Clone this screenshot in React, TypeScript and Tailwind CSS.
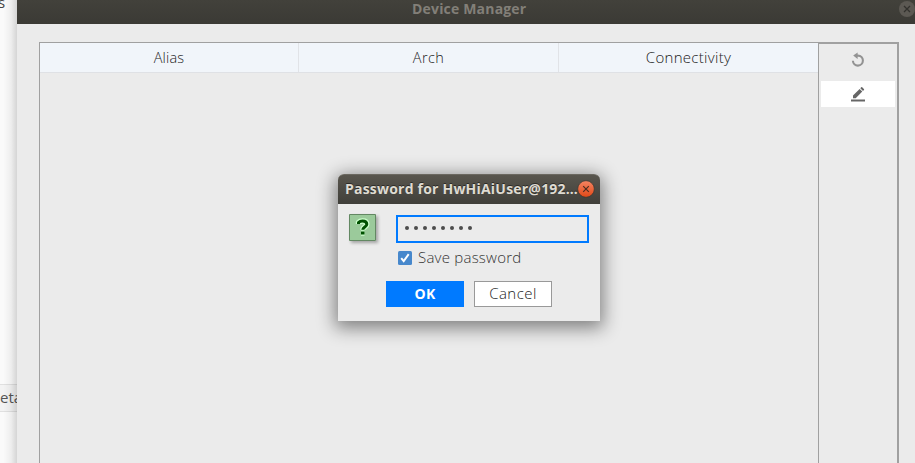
const columns = [
  { name: "Alias", spacing: "tracking-[0.15px]" },
  { name: "Arch", spacing: "tracking-[0.4px]" },
  { name: "Connectivity", spacing: "tracking-[0.3px] text-[15px]" },
];

function BackgroundWindow() {
  return (
    <div className="relative h-full w-[17px] shrink-0 overflow-hidden bg-[#fafafa] text-[15px] leading-5 text-[#555]">
      <div className="-mt-[8px] h-[392px] text-[#444]"><span className="-ml-[2px]">s</span></div>
      <div className="flex h-7 items-center border-y border-[#e0e0e0] bg-[#f3f3f3] pb-0.5">
        <span>eta</span>
      </div>
      <div className="absolute inset-0 bg-linear-to-r from-transparent from-20% via-black/5 via-65% to-black/15" />
    </div>
  );
}

function RefreshIcon() {
  return (
    <svg width="14" height="16" viewBox="0 0 14 16" fill="none">
      <path d="M5 3.6H7a5 5 0 1 1-5.1 5.2" stroke="#929292" strokeWidth="2.1" />
      <path d="M6.6 .4v6.5L2.2 3.6z" fill="#929292" />
    </svg>
  );
}

function EditIcon() {
  return (
    <svg width="14" height="15" viewBox="0 0 14 15" fill="#666">
      <path d="M2 8.5 8.6 1.9l2.7 2.7-6.6 6.6H2zM9.3 1.2l.9-.9q.5-.5 1 0l1.7 1.7q.5.5 0 1l-.9.9z" />
      <path d="M0 12.5h14v2H0z" />
    </svg>
  );
}

function PasswordDialog() {
  return (
    <div className="absolute left-[338px] top-[174px] h-[147px] w-[262px] rounded-t-[6px] bg-[#ebebeb] shadow-[0_4px_18px_3px_rgba(0,0,0,0.46)]">
      <div className="flex h-[30px] items-center rounded-t-[6px] border-t border-[#6b6860] bg-linear-to-b from-[#59564e] to-[#403f3a] pb-px pl-[7px]">
        <span className="w-[232px] shrink-0 whitespace-nowrap text-[14px] font-bold leading-7 tracking-[0.21px] text-[#dfdbd2] [text-shadow:0_-1px_0_#2c2b27]">
          Password for HwHiAiUser@192…
        </span>
        <svg className="shrink-0" width="18" height="18" viewBox="0 0 18 18">
          <defs>
            <linearGradient id="closeFill" x2="0" y2="1">
              <stop stopColor="#f58563" />
              <stop offset="1" stopColor="#df4817" />
            </linearGradient>
          </defs>
          <circle cx="9" cy="9" r="8.3" fill="url(#closeFill)" stroke="#383630" strokeWidth=".7" />
          <path d="m6.2 6.2 5.6 5.6m0-5.6-5.6 5.6" stroke="#4b2d20" strokeWidth="1.2" />
        </svg>
      </div>
      <div className="flex pl-[11px] pt-[10px]">
        <svg width="27" height="27" viewBox="0 0 27 27" className="shrink-0 shadow-[2px_2px_3px_rgba(0,0,0,0.3)]">
          <path d="M.5.5h26v26H.5z" fill="#9bca9b" stroke="#638863" />
          <g fill="none" strokeLinejoin="round">
            <path d="M9.5 10V8.5Q11 7 13.5 7c3 0 4.3 1.2 4.3 3.2 0 2.8-4 2.8-4 5.5M12 19h3.5" stroke="#cbffcb" strokeWidth="5.5" />
            <path d="M9.5 10V8.5Q11 7 13.5 7c3 0 4.3 1.2 4.3 3.2 0 2.8-4 2.8-4 5.5M12 19h3.5" stroke="#005000" strokeWidth="3" />
          </g>
        </svg>
        <div className="ml-5 mt-px flex flex-col">
          <div className="flex h-7 w-[193px] gap-[5px] border-2 border-[#007aff] pl-[7px] pt-[9px]">
            {Array.from({ length: 8 }, (_, i) => (
              <i key={i} className="size-1 rounded-full bg-[#4c4c4c]" />
            ))}
          </div>
          <label className="mt-[5px] flex h-5 items-center pl-0.5">
            <svg width="14" height="14" viewBox="0 0 14 14">
              <rect width="14" height="14" rx="1.5" fill="#4788cc" />
              <path d="m3.2 7.2 2.5 3 5-7" fill="none" stroke="white" strokeWidth="2" />
            </svg>
            <span className="mb-0.5 ml-1.5 text-[15px] font-light leading-5 tracking-[0.23px] text-[#333]">Save password</span>
          </label>
        </div>
      </div>
      <div className="mt-[13px] flex gap-2.5 pl-12 text-[15px]">
        <button className="h-[26px] w-[78px] bg-[#007aff] text-[14px] font-bold leading-6 tracking-[0.3px] text-white">OK</button>
        <button className="h-[26px] w-[78px] border border-[#999] bg-white pb-0.5 font-light leading-[22px] tracking-[0.45px] text-[#222]">Cancel</button>
      </div>
    </div>
  );
}

export default function App() {
  return (
    <div className="relative flex h-[463px] w-[915px] overflow-hidden bg-[#ebebeb] font-['Open_Sans','Noto_Sans',sans-serif]">
      <BackgroundWindow />
      <main className="flex h-full w-[898px] shrink-0 flex-col">
        <header className="relative flex h-6 items-start bg-linear-to-b from-[#42413b] to-[#3b3a35] pl-[395px]">
          <h1 className="-mt-px text-[14px] font-bold leading-[20px] tracking-[0.18px] text-[#827f78]">Device Manager</h1>
          <svg className="absolute right-0 top-px" width="16" height="16" viewBox="0 0 16 16">
            <circle cx="8" cy="8" r="8" fill="#5c5953" />
            <path d="m5 5 6 6m0-6-6 6" stroke="#32312d" strokeWidth="1.3" />
          </svg>
        </header>
        <div className="ml-[22px] mt-[18px] flex h-[421px]">
          <div className="w-[779px] border-l border-t border-[#a0a0a0]">
            <div className="grid h-[30px] grid-cols-[259px_260px_259px] border-b border-[#dfe1e5] bg-[#f1f5fa] text-[14.5px]">
              {columns.map(({ name, spacing }) => (
                <div key={name} className="flex items-center justify-center border-r border-[#e1e3e7] font-light text-[#222] last:border-r-0">
                  <span className={spacing}>{name}</span>
                </div>
              ))}
            </div>
          </div>
          <aside className="w-[81px] border-l border-r-2 border-t-2 border-[#a0a0a0] px-0.5">
            <div className="flex h-[37px] items-center justify-center pb-[6px]"><RefreshIcon /></div>
            <div className="flex h-[26px] items-center justify-center bg-white"><EditIcon /></div>
          </aside>
        </div>
      </main>
      <PasswordDialog />
    </div>
  );
}
